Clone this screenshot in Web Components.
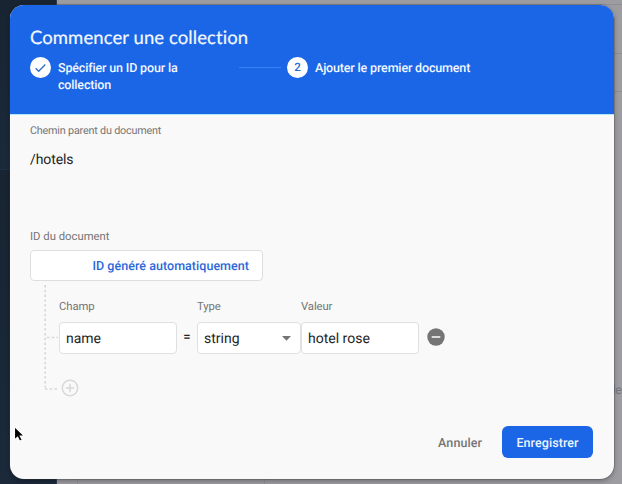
<!DOCTYPE html>
<html lang="fr">
<head>
<meta charset="utf-8">
<title>Commencer une collection</title>
<style>
html, body { margin: 0; width: 622px; height: 484px; overflow: hidden; }
body { font-family: Roboto, "Liberation Sans", sans-serif; color: #242424; text-rendering: geometricPrecision; }
</style>
</head>
<body>
<console-page>
  <collection-dialog>
    <dialog-header slot="header" heading="Commencer une collection">
      <wizard-step done style="width:257px">Spécifier un ID pour la collection</wizard-step>
      <wizard-step active number="2">Ajouter le premier document</wizard-step>
    </dialog-header>
    <parent-path label="Chemin parent du document">/hotels</parent-path>
    <document-id label="ID du document">ID généré automatiquement</document-id>
    <field-tree>
      <text-field label="Champ" style="width:118px">name</text-field>
      <span slot="equals">=</span>
      <text-field slot="type" select label="Type" style="width:104px">string</text-field>
      <text-field slot="value" label="Valeur" style="width:118px">hotel rose</text-field>
    </field-tree>
    <action-button slot="footer">Annuler</action-button>
    <action-button slot="footer" primary>Enregistrer</action-button>
  </collection-dialog>
</console-page>
<script>
const define = (name, render) => customElements.define(name, class extends HTMLElement {
  constructor() { super(); this.attachShadow({ mode: 'open' }); }
  connectedCallback() { this.shadowRoot.innerHTML = render(this); }
});

define('console-page', () => `
<style>
:host { display: grid; grid-template-columns: 57px 1fr; width: 622px; height: 484px; position: relative; overflow: hidden; }
.nav { background: #182431; border-right: 1px solid #2d3a4b; box-sizing: border-box; display: grid; grid-template-rows: 169px 1px 1fr; }
.nav i { background: #1c3145; }
.nav b { background: linear-gradient(#182431, #1b293b); }
.main { background: #9c9ca1; display: grid; grid-template-rows: 4px 1px 48px 1px 37px 1px 289px 1fr; }
.main i { background: #8e8e93; }
.main span { color: #77777c; font-size: 12.5px; line-height: 20px; justify-self: end; letter-spacing: -.3px; margin-right: .5px; }
.over { position: absolute; left: 10px; top: 5px; }
.cursor { position: absolute; left: 13px; top: 425px; }
.col { grid-row: 8; grid-column: 1; display: grid; grid-template-rows: 20px 1fr; }
.col .cells { margin-left: 20px; border-left: 1px solid #919196; }
.col .cells b { display: block; height: 100%; margin-left: 186px; border-left: 1px solid #919196; }
</style>
<div class="nav"><b></b><i></i><b></b></div>
<div class="main"><b></b><i></i><b></b><i></i><b></b><i></i><b></b><div class="col"><span>le</span><div class="cells"><b></b></div></div></div>
<div class="over"><slot></slot></div>
<svg class="cursor" width="14" height="20" viewBox="0 0 14 20"><path d="M1.5 1.5v13.4l3.1-2.8 2.1 4.2 2.5-1.2-2-4.1h4.2z" fill="#000" stroke="#fff" stroke-width="1.1"/></svg>`);

define('collection-dialog', () => `
<style>
:host { display: flex; flex-direction: column; width: 604px; height: 473.5px; background: #f9f9f9; border-radius: 14px; overflow: hidden; box-shadow: 0 0 0 .5px rgba(60,60,65,.5), 0 2px 5px rgba(0,0,0,.3); }
.body { flex: 1; padding: 0 20px; display: flex; flex-direction: column; }
.foot { display: flex; justify-content: flex-end; gap: 6px; padding: 0 21px 20.5px 0; }
</style>
<slot name="header"></slot>
<div class="body"><slot></slot></div>
<div class="foot"><slot name="footer"></slot></div>`);

define('dialog-header', el => `
<style>
:host { display: flex; flex-direction: column; height: 109px; box-sizing: border-box; background: #1a66e6; padding: 20px 20px 0; box-shadow: 0 1px 0 #b4e5fa; color: #f2f7ff; }
h1 { margin: 0; font: 400 18.5px/24px Lato, sans-serif; letter-spacing: .08px; white-space: nowrap; -webkit-text-stroke: .2px currentColor; }
.steps { display: flex; align-items: flex-start; margin-top: 8px; }
</style>
<h1>${el.getAttribute('heading')}</h1>
<div class="steps"><slot></slot></div>`);

define('wizard-step', el => `
<style>
:host { display: flex; align-items: flex-start; font-weight: 500; font-size: 12.5px; line-height: 17px; letter-spacing: -.16px; }
.badge { flex: none; width: 21px; height: 21px; border-radius: 50%; background: #fff; color: #2869d4; display: flex; align-items: center; justify-content: center; font-size: 11.5px; }
.text { margin: 3px 0 0 7px; flex: none; ${el.hasAttribute('done') ? 'width: 128px' : ''} }
.line { flex: none; width: 42px; height: 1px; margin: 10px 7px 0 53px; background: #3980f3; }
</style>
<span class="badge">${el.hasAttribute('done')
  ? '<svg width="13" height="12" viewBox="0 0 13 12"><path d="M1.6 6.3l3.1 3 6.6-6.8" fill="none" stroke="#3470c9" stroke-width="1.4"/></svg>'
  : el.getAttribute('number')}</span>
<span class="text"><slot></slot></span>
${el.hasAttribute('done') ? '<span class="line"></span>' : ''}`);

define('parent-path', el => `
<style>
:host { display: block; margin-top: 9px; height: 106px; }
.label { color: #757575; font-size: 10.8px; line-height: 16px; letter-spacing: -.2px; }
.path { font-size: 14px; line-height: 20px; margin-top: 11px; letter-spacing: -.1px; }
</style>
<div class="label">${el.getAttribute('label')}</div>
<div class="path"><slot></slot></div>`);

define('document-id', el => `
<style>
:host { display: block; }
.label { color: #757575; font-size: 11.3px; line-height: 16px; }
.box { box-sizing: border-box; width: 233px; height: 31px; margin-top: 5px; padding: 1px 13px 0 0; background: #fff; border: 1px solid #dedede; border-radius: 4px; display: flex; align-items: center; justify-content: flex-end; color: #2b68d8; font-weight: 500; font-size: 12.5px; letter-spacing: .04px; }
</style>
<div class="label">${el.getAttribute('label')}</div>
<div class="box"><slot></slot></div>`);

define('field-tree', () => `
<style>
:host { display: grid; grid-template-columns: 15px auto 20px auto auto 36px; grid-template-rows: 70px 1fr; padding-left: 14px; margin-top: 3px; height: 116px; justify-content: start; }
.rail { grid-row: 1 / 3; }
.eq { align-self: end; height: 32px; line-height: 31px; text-align: center; font-size: 13px; font-weight: 500; }
::slotted(text-field) { align-self: end; }
.value { display: flex; align-items: flex-end; }
.remove { align-self: end; margin: 0 0 8.5px 8px; }
.add { grid-column: 2 / 7; padding: 25px 0 0 2px; }
svg { display: block; }
</style>
<svg class="rail" width="15" height="106" viewBox="0 0 15 106"><path d="M1.2 1v102.5M3 53.5h11M1 105h13" fill="none" stroke="#d6d6d6" stroke-width="1.6" stroke-dasharray="2.4 2.4"/></svg>
<slot></slot>
<span class="eq"><slot name="equals"></slot></span>
<slot name="type"></slot>
<div class="value"><slot name="value"></slot></div>
<svg class="remove" width="18" height="18" viewBox="0 0 18 18"><circle cx="9" cy="9" r="8.7" fill="#757575"/><path d="M4.7 9h8.6" stroke="#fff" stroke-width="1.5"/></svg>
<div class="add"><svg width="18" height="18" viewBox="0 0 18 18"><circle cx="9" cy="9" r="7.7" fill="none" stroke="#d8d8d8" stroke-width="1.5"/><path d="M4.7 9h8.6M9 4.7v8.6" stroke="#d8d8d8" stroke-width="1.5"/></svg></div>`);

define('text-field', el => `
<style>
:host { display: block; }
.label { color: #757575; font-size: 11.3px; line-height: 16px; letter-spacing: -.1px; }
.box { box-sizing: border-box; height: 32px; margin-top: 7px; padding: 1px 9px 0 6px; background: #fff; border: 1px solid #e0e0e0; border-radius: 4px; display: flex; align-items: center; justify-content: space-between; font-size: 14px; }
</style>
<div class="label">${el.getAttribute('label')}</div>
<div class="box"><span><slot></slot></span>${el.hasAttribute('select') ? '<svg width="9" height="5" viewBox="0 0 9 5"><path d="M0 0h9L4.5 4.7z" fill="#757575"/></svg>' : ''}</div>`);

define('action-button', el => `
<style>
:host { display: block; }
.btn { box-sizing: border-box; height: 32px; padding: 2px 14px 0; display: flex; align-items: center; justify-content: center; border-radius: 6px; font-weight: 500; font-size: 12.5px; letter-spacing: .08px; color: #757575; }
.primary { width: 91px; background: #1a66e6; color: #edf5ff; padding: 2px 0 0; }
</style>
<div class="btn ${el.hasAttribute('primary') ? 'primary' : ''}"><slot></slot></div>`);
</script>
</body>
</html>
